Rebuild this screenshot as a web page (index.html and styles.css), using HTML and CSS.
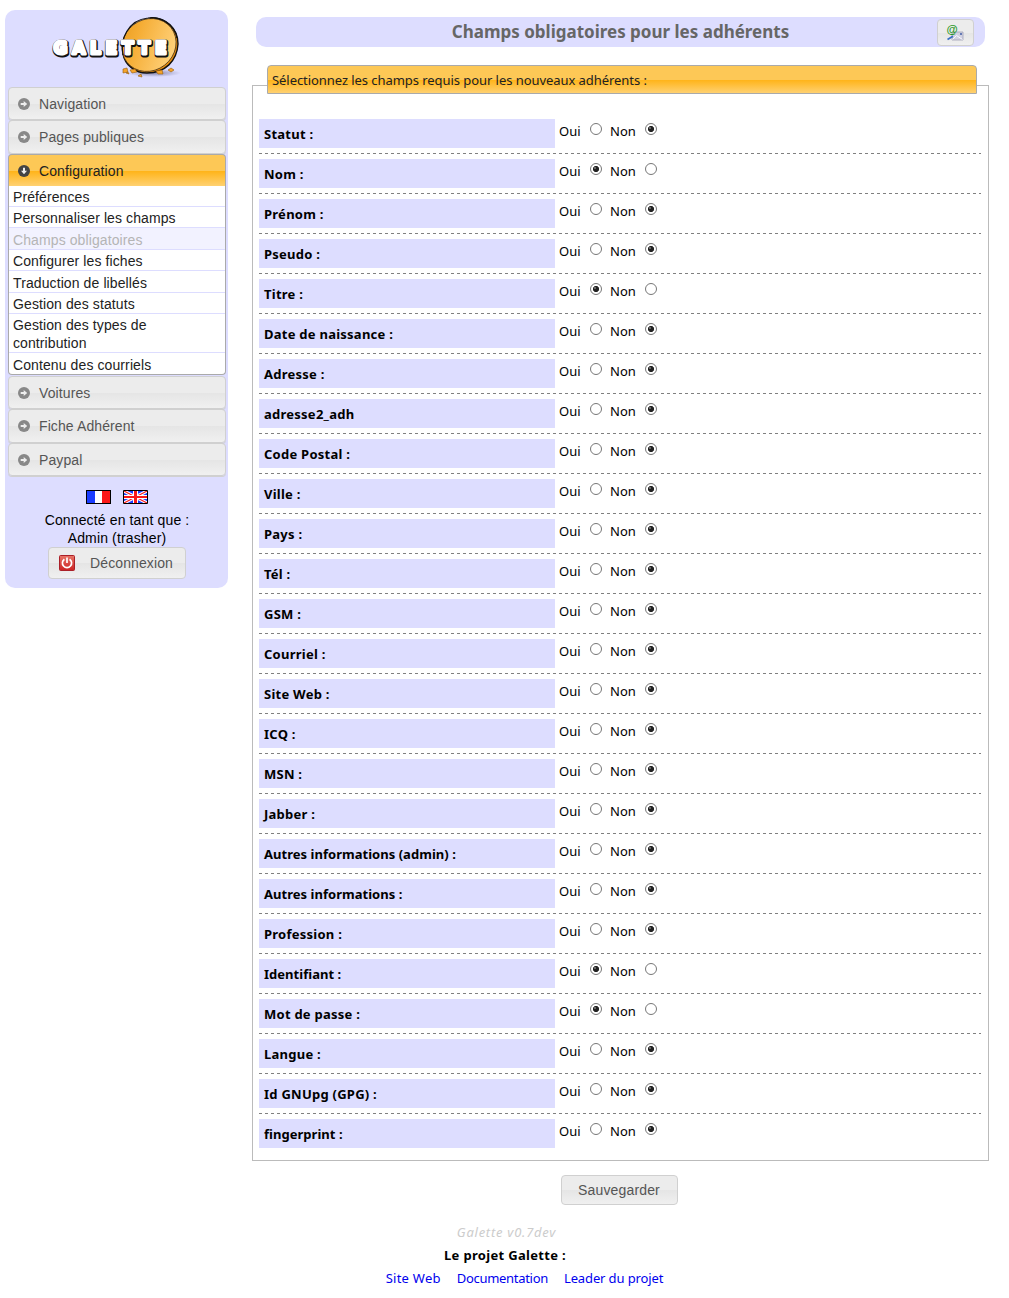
FILE: index.html
```html
<!DOCTYPE html>
<html lang="fr">
<head>
<meta charset="utf-8">
<title>Galette - Champs obligatoires pour les adhérents</title>
<link rel="stylesheet" href="styles.css">
</head>
<body>
<svg class="defs" width="0" height="0" aria-hidden="true">
  <symbol id="arrow" viewBox="0 0 12 12"><circle cx="6" cy="6" r="6" fill="currentColor"/><path d="M2.700 5h3V3L9.200 6 5.700 9V7H2.700z" class="cut"/></symbol>
</svg>
<div class="page">
  <aside class="menu">
    <svg class="logo" width="134" height="66" viewBox="0 0 134 66">
      <defs>
        <linearGradient id="cake" x1="0" y1="0" x2=".7" y2="1"><stop offset="0" stop-color="#e99a1c"/><stop offset=".35" stop-color="#f5ad35"/><stop offset="1" stop-color="#ffd27c"/></linearGradient>
        <radialGradient id="shade"><stop offset="0" stop-color="#8888ac"/><stop offset="1" stop-color="#8888ac" stop-opacity="0"/></radialGradient>
      </defs>
      <g transform="translate(-3 3)">
        <ellipse cx="107" cy="57" rx="27" ry="4" fill="url(#shade)"/>
        <path d="M104 2C118 1 131 12 131 28C130 45 118 57 100 57C88 57 78 49 76 38z" fill="#e88d0d" stroke="#111" stroke-width="1.4"/>
        <ellipse cx="102" cy="29" rx="28" ry="25.500" transform="rotate(-38 102 29)" fill="url(#cake)" stroke="#3b2812" stroke-width=".7"/>
        <path d="M76 39C73 23 81 4 101 2C114 0 128 9 130 22" fill="none" stroke="#111" stroke-width="1.200"/>
        <g fill="#f5a42a" stroke="#965c0c" stroke-width=".6"><path d="M76 53l4-1 1 4-5 1zM83 54l5-1 2 3-5 1zM91 60l3-2 1 3zM109 55l6-1 1 4-5 0zM121 54l3-2 3 2-3 2zM79 57l2-1 1 2z"/></g>
      </g>
      <g class="logo-edge"><text x="4" y="41.800" textLength="113">GALETTE</text></g>
      <g class="logo-text"><text x="3.500" y="41.200" textLength="113">GALETTE</text></g>
    </svg>
    <nav class="accordion">
      <h3><svg class="arrow"><use href="#arrow"/></svg>Navigation</h3>
      <h3><svg class="arrow"><use href="#arrow"/></svg>Pages publiques</h3>
      <h3 class="open"><svg class="arrow down"><use href="#arrow"/></svg>Configuration</h3>
      <ul>
        <li>Préférences</li>
        <li>Personnaliser les champs</li>
        <li class="selected">Champs obligatoires</li>
        <li>Configurer les fiches</li>
        <li>Traduction de libellés</li>
        <li>Gestion des statuts</li>
        <li>Gestion des types de contribution</li>
        <li>Contenu des courriels</li>
      </ul>
      <h3><svg class="arrow"><use href="#arrow"/></svg>Voitures</h3>
      <h3><svg class="arrow"><use href="#arrow"/></svg>Fiche Adhérent</h3>
      <h3><svg class="arrow"><use href="#arrow"/></svg>Paypal</h3>
    </nav>
    <div class="flags">
      <svg width="25" height="14" viewBox="0 0 25 14"><path fill="#000" d="M0 0h25v14H0z"/><path fill="#1a3cff" d="M1 1h8v12H1z"/><path fill="#fff" d="M9 1h7v12H9z"/><path fill="#fb1818" d="M16 1h8v12h-8z"/></svg>
      <svg width="25" height="14" viewBox="0 0 25 14"><path fill="#1a3cff" d="M1 1h23v12H1z"/><path d="M1 1l23 12M24 1L1 13" stroke="#fff" stroke-width="3.200"/><path d="M1 1l23 12M24 1L1 13" stroke="#fb1818" stroke-width="1.100"/><path fill="#fff" d="M10 1h5v12h-5zM1 5h23v4H1z"/><path fill="#fb1818" d="M11 1h3v12h-3zM1 6h23v2H1z"/><path d="M.5.5h24v13H.5z" fill="none" stroke="#000"/></svg>
    </div>
    <p class="user">Connecté en tant que :<br>Admin (trasher)</p>
    <a class="button logout">
      <svg width="16" height="16" viewBox="0 0 16 16"><defs><linearGradient id="red" x2="0" y2="1"><stop stop-color="#e87668"/><stop offset="1" stop-color="#c22"/></linearGradient></defs><rect x=".5" y=".5" width="15" height="15" rx="1" fill="url(#red)" stroke="#aa2028"/><path d="M5.400 4.200a4.600 4.600 0 1 0 5.200 0" fill="none" stroke="#fff" stroke-width="1.700"/><path d="M8 2.500v5.500" stroke="#fff" stroke-width="1.700"/></svg>
      <span>Déconnexion</span>
    </a>
  </aside>
  <main>
    <header class="title">
      <h1>Champs obligatoires pour les adhérents</h1>
      <a class="button tool">
        <svg width="18" height="18" viewBox="0 0 18 18"><path d="M6 9h11v8H6z" fill="#d2d2e2" stroke="#a2a2b8" stroke-width=".8"/><path d="M6.500 16.500l4-4 6 4" fill="none" stroke="#f8f8ff"/><path d="M14 10h2v2h-2z" fill="#667bb5"/><path d="M1.500 16.500l5.500-3.200" stroke="#3970c4" stroke-width="1.800"/><text x="0.500" y="10" class="at">@</text></svg>
      </a>
    </header>
    <section class="fields">
      <h2>Sélectionnez les champs requis pour les nouveaux adhérents :</h2>
      <div class="row"><b>Statut :</b><label>Oui<i></i></label><label>Non<i class="on"></i></label></div>
      <div class="row"><b>Nom :</b><label>Oui<i class="on"></i></label><label>Non<i></i></label></div>
      <div class="row"><b>Prénom :</b><label>Oui<i></i></label><label>Non<i class="on"></i></label></div>
      <div class="row"><b>Pseudo :</b><label>Oui<i></i></label><label>Non<i class="on"></i></label></div>
      <div class="row"><b>Titre :</b><label>Oui<i class="on"></i></label><label>Non<i></i></label></div>
      <div class="row"><b>Date de naissance :</b><label>Oui<i></i></label><label>Non<i class="on"></i></label></div>
      <div class="row"><b>Adresse :</b><label>Oui<i></i></label><label>Non<i class="on"></i></label></div>
      <div class="row"><b>adresse2_adh</b><label>Oui<i></i></label><label>Non<i class="on"></i></label></div>
      <div class="row"><b>Code Postal :</b><label>Oui<i></i></label><label>Non<i class="on"></i></label></div>
      <div class="row"><b>Ville :</b><label>Oui<i></i></label><label>Non<i class="on"></i></label></div>
      <div class="row"><b>Pays :</b><label>Oui<i></i></label><label>Non<i class="on"></i></label></div>
      <div class="row"><b>Tél :</b><label>Oui<i></i></label><label>Non<i class="on"></i></label></div>
      <div class="row"><b>GSM :</b><label>Oui<i></i></label><label>Non<i class="on"></i></label></div>
      <div class="row"><b>Courriel :</b><label>Oui<i></i></label><label>Non<i class="on"></i></label></div>
      <div class="row"><b>Site Web :</b><label>Oui<i></i></label><label>Non<i class="on"></i></label></div>
      <div class="row"><b>ICQ :</b><label>Oui<i></i></label><label>Non<i class="on"></i></label></div>
      <div class="row"><b>MSN :</b><label>Oui<i></i></label><label>Non<i class="on"></i></label></div>
      <div class="row"><b>Jabber :</b><label>Oui<i></i></label><label>Non<i class="on"></i></label></div>
      <div class="row"><b class="long">Autres informations (admin) :</b><label>Oui<i></i></label><label>Non<i class="on"></i></label></div>
      <div class="row"><b class="long">Autres informations :</b><label>Oui<i></i></label><label>Non<i class="on"></i></label></div>
      <div class="row"><b>Profession :</b><label>Oui<i></i></label><label>Non<i class="on"></i></label></div>
      <div class="row"><b class="long">Identifiant :</b><label>Oui<i class="on"></i></label><label>Non<i></i></label></div>
      <div class="row"><b>Mot de passe :</b><label>Oui<i class="on"></i></label><label>Non<i></i></label></div>
      <div class="row"><b>Langue :</b><label>Oui<i></i></label><label>Non<i class="on"></i></label></div>
      <div class="row"><b>Id GNUpg (GPG) :</b><label>Oui<i></i></label><label>Non<i class="on"></i></label></div>
      <div class="row"><b class="long">fingerprint :</b><label>Oui<i></i></label><label>Non<i class="on"></i></label></div>
    </section>
    <a class="button save">Sauvegarder</a>
  </main>
</div>
<footer>
  <p class="version">Galette v0.7dev</p>
  <p class="project">Le projet Galette :</p>
  <p class="links"><a class="wide">Site Web</a><a class="tight">Documentation</a><a>Leader du projet</a></p>
</footer>
</body>
</html>
```
FILE: styles.css
```css
* { box-sizing: border-box; }
body {
  margin: 0;
  background: #fff;
  color: #000;
  font: 13px/18px "Noto Sans", sans-serif;
}
h1, h2, h3, p, ul { margin: 0; padding: 0; }
ul { list-style: none; }
.defs { display: block; }
.page {
  display: flex;
  align-items: flex-start;
  padding: 10px 20px 0 5px;
}

/* Sidebar */
.menu {
  display: flex;
  flex-direction: column;
  align-items: center;
  width: 223px;
  height: 578px;
  padding: 3px 2px 0 3px;
  border-radius: 10px;
  background: #ddf;
  font-family: "Liberation Sans", sans-serif;
  font-size: 14px;
  letter-spacing: .1px;
}
.logo { flex: none; margin-bottom: 8px; }
.logo-text, .logo-edge {
  font: bold 17px "DejaVu Sans", sans-serif;
  letter-spacing: 0;
  stroke-linejoin: round;
  paint-order: stroke;
}
.logo-text { fill: #fff; stroke: #fff; stroke-width: 3px; }
.logo-edge { fill: #111; stroke: #111; stroke-width: 5px; }
.accordion { width: 218px; }
.accordion h3 {
  display: flex;
  align-items: center;
  height: 33.4px;
  padding: .6px 0 0 9px;
  border: 1px solid #d0d0d0;
  border-radius: 4px;
  background: linear-gradient(#ececec 0 50%, #e5e5e5 51%, #f0f0f0);
  box-shadow: 0 1px 0 #d0d0d0;
  color: #555;
  font-size: 14px;
  font-weight: normal;
}
.arrow { width: 12px; height: 12px; margin-right: 9px; color: #888; }
.cut { fill: #eee; }
.down { transform: rotate(90deg); color: #444; }
.accordion .open {
  height: 32px;
  padding-top: 2px;
  border-color: #aaa;
  border-bottom: 0;
  border-radius: 4px 4px 0 0;
  background: linear-gradient(#fdc856 0 50%, #ffb317 51%, #ffd171);
  box-shadow: none;
  color: #222;
}
.accordion ul {
  height: 189px;
  margin-bottom: 1.3px;
  border: 1px solid #aaa;
  border-top: 0;
  border-radius: 0 0 4px 4px;
  background: #fff;
  color: #222;
}
.accordion li {
  padding: 2.35px 0 0 4px;
  border-bottom: 1px solid #ddf;
}
.accordion li:nth-child(7) { padding-right: 60px; }
.accordion li:last-child { border: 0; }
.accordion .selected { background: #f2f2ff; color: #b5b5b5; }
.flags { display: flex; gap: 12px; margin: 13.7px 0 7px; }
.flags svg { display: block; }
.user { text-align: center; letter-spacing: .14px; }
.button {
  display: flex;
  align-items: center;
  justify-content: center;
  border: 1px solid #d0d0d0;
  border-radius: 4px;
  background: linear-gradient(#ececec 0 50%, #e5e5e5 51%, #f0f0f0);
  color: #555;
}
.logout {
  width: 138px;
  height: 32px;
  padding-right: 2px;
  gap: 15px;
}

/* Content */
main { width: 737px; margin: 7px 0 0 24px; }
.title {
  display: flex;
  align-items: center;
  height: 30px;
  margin: 0 4px;
  padding-right: 11px;
  border-radius: 10px;
  background: #ddf;
}
h1 {
  flex: 1;
  padding-left: 48px;
  color: #666;
  font-size: 17px;
  line-height: 30px;
  text-align: center;
}
.tool { width: 37px; height: 27px; padding: 0 1px 1px 0; }
.at { fill: #2b9a2b; font: bold 11.5px "Liberation Sans", sans-serif; }
.fields {
  height: 1076px;
  margin: 38px 0 0;
  padding: 0 7px 0 6px;
  border: 1px solid #bbb;
}
h2 {
  width: 710px;
  height: 29px;
  margin: -21px 0 25px 8px;
  padding: 0 4px;
  border: 1px solid #aaa;
  border-radius: 4px 4px 0 0;
  background: linear-gradient(#fdc856 0 50%, #ffb317 51%, #ffd171);
  color: #222;
  font-size: 13px;
  font-weight: normal;
  letter-spacing: -.06px;
  line-height: 29px;
}
.row {
  display: flex;
  height: 40px;
  background: repeating-linear-gradient(90deg, #808080 0 3px, transparent 3px 6px) 0 34px / 100% 1px no-repeat;
}
.row:last-child { background: none; }
.row b {
  width: 296px;
  height: 29px;
  margin-right: 4px;
  padding-left: 5px;
  background: #ddf;
  letter-spacing: .25px;
  line-height: 31px;
}
.row .long { letter-spacing: .03px; }
.row label { display: flex; width: 43px; margin-right: 8px; line-height: 25px; }
.row label + label { width: 47px; }
.row i {
  width: 12px;
  height: 12px;
  margin: 4px 0 0 auto;
  border: 1px solid #777;
  border-radius: 50%;
  background: #fff;
}
.row .on { background: radial-gradient(circle at 4px 4px, #999 0 .5px, transparent 1px), radial-gradient(circle, #222 0 2.700px, #fff 3.500px); }
.save {
  width: 117px;
  height: 30px;
  margin: 14px 0 0 309px;
  padding-right: 1px;
  font: 14px "Liberation Sans", sans-serif;
  letter-spacing: .15px;
}

/* Footer */
footer { width: 1009px; padding-top: 16px; text-align: center; }
footer p { line-height: 23px; }
.version { padding-left: 4px; color: #ccc; font-style: italic; letter-spacing: .75px; }
.project { padding-left: 1px; font-weight: bold; letter-spacing: .32px; }
.links { display: flex; justify-content: center; gap: 16px; padding-left: 40px; color: #00e; letter-spacing: -.12px; }
.links .wide { letter-spacing: .25px; }
.links .tight { letter-spacing: -.3px; }
```
